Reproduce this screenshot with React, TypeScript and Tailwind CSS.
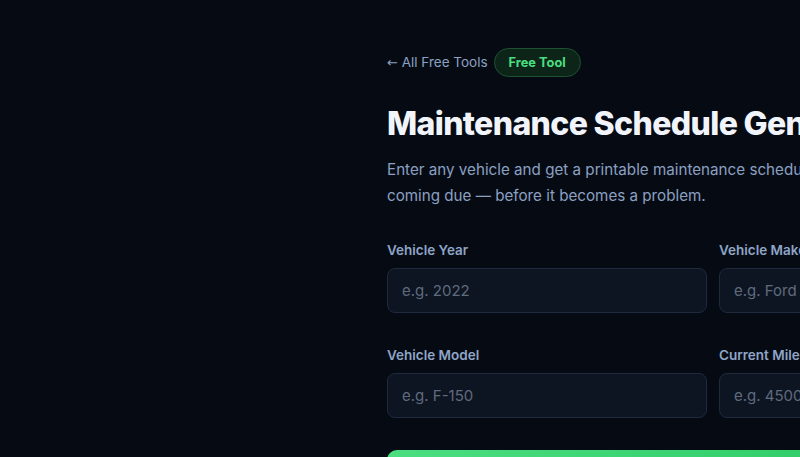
import React from "react";

function Field({ label, placeholder }: { label: string; placeholder: string }) {
  return (
    <div className="flex flex-col">
      <label className="text-[13.5px] leading-[20px] font-semibold text-[#8fa5c8] mb-[8px]">{label}</label>
      <input
        placeholder={placeholder}
        className="h-[45px] w-full rounded-[8px] border border-[#1f2a3e] bg-[#0e1522] px-[14px] text-[15px] text-[#e2e8f0] placeholder:text-[#5f6b7d] outline-none"
        style={{ fontFamily: "Inter, sans-serif" }}
      />
    </div>
  );
}

export default function App() {
  return (
    <div
      className="w-[800px] h-[457px] overflow-hidden bg-[#060b13]"
      style={{ fontFamily: "Inter, 'Noto Sans', sans-serif" }}
    >
      <div className="pl-[387px] pt-[48px] w-[1100px]">
        <div className="w-[652px]">
          <div className="flex items-center gap-[6px]">
            <span className="text-[13.5px] text-[#8ba1c3]">
              <span style={{ fontFamily: "'DejaVu Sans', sans-serif" }} className="text-[13px]">←</span> All Free Tools
            </span>
            <span className="h-[29px] px-[14px] flex items-center rounded-full border border-[#1d5233] bg-[#0d2419] text-[12.8px] font-bold text-[#4ade80]">
              Free Tool
            </span>
          </div>
          <h1 className="mt-[27px] text-[32px] leading-[40px] font-extrabold tracking-[-0.02em] text-[#f1f5fb] whitespace-nowrap">
            Maintenance Schedule Generator
          </h1>
          <p className="mt-[13px] text-[15.2px] leading-[26px] text-[#8ba0c2]">
            Enter any vehicle and get a printable maintenance schedule showing exactly what's coming due — before it becomes a problem.
          </p>
          <div className="mt-[31px] grid grid-cols-2 gap-x-[12px] gap-y-[32px]">
            <Field label="Vehicle Year" placeholder="e.g. 2022" />
            <Field label="Vehicle Make" placeholder="e.g. Ford" />
            <Field label="Vehicle Model" placeholder="e.g. F-150" />
            <Field label="Current Mileage" placeholder="e.g. 45000" />
          </div>
          <button className="mt-[32px] h-[52px] w-full rounded-[10px] bg-gradient-to-r from-[#4ade80] to-[#22c55e] text-[16px] font-bold text-[#04130a]">
            Generate Schedule
          </button>
        </div>
      </div>
    </div>
  );
}
